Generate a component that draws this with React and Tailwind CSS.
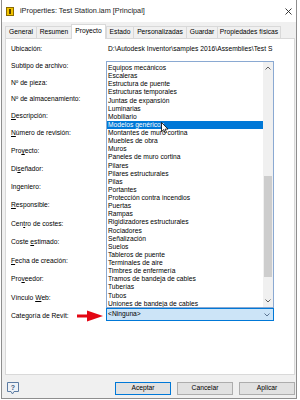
const rows = [
  { label: 'Ubicación:', h: 'h-[17px]' },
  { label: 'Subtipo de archivo:', h: 'h-[17px]' },
  { label: 'Nº de pieza:', h: 'h-[16px]' },
  { label: 'Nº de almacenamiento:', h: 'h-[17px]' },
  { label: 'Descripción:', u: 0, h: 'h-[17px]' },
  { label: 'Número de revisión:', u: 0, h: 'h-[18px]' },
  { label: 'Proyecto:', u: 3, h: 'h-[18px]' },
  { label: 'Diseñador:', u: 2, h: 'h-[18px]' },
  { label: 'Ingeniero:', h: 'h-[18px]' },
  { label: 'Responsible:', u: 0, h: 'h-[19px]' },
  { label: 'Centro de costes:', u: 3, h: 'h-[18px]' },
  { label: 'Coste estimado:', u: 6, h: 'h-[19px]' },
  { label: 'Fecha de creación:', u: 0, h: 'h-[18px]' },
  { label: 'Proveedor:', u: 3, h: 'h-[19px]' },
  { label: 'Vínculo Web:', u: 8, h: 'h-[16px]' },
];

const categories = [
  'Equipos mecánicos', 'Escaleras', 'Estructura de puente', 'Estructuras temporales',
  'Juntas de expansión', 'Luminarias', 'Mobiliario', 'Modelos genéricos',
  'Montantes de muro cortina', 'Muebles de obra', 'Muros', 'Paneles de muro cortina',
  'Pilares', 'Pilares estructurales', 'Pilas', 'Portantes', 'Protección contra incendios',
  'Puertas', 'Rampas', 'Rigidizadores estructurales', 'Rociadores', 'Señalización',
  'Suelos', 'Tableros de puente', 'Terminales de aire', 'Timbres de enfermería',
  'Tramos de bandeja de cables', 'Tuberías', 'Tubos', 'Uniones de bandeja de cables',
];

const tabs = [
  { name: 'General', w: 'w-[31px]' },
  { name: 'Resumen', w: 'w-[35px]' },
  { name: 'Proyecto', w: 'w-[35px]', active: true },
  { name: 'Estado', w: 'w-[27px]' },
  { name: 'Personalizadas', w: 'w-[53px]' },
  { name: 'Guardar', w: 'w-[31px]' },
  { name: 'Propiedades físicas', w: 'w-[64px]', last: true },
];

function Label({ text, u }) {
  if (u === undefined) return <span>{text}</span>;
  return (
    <span>
      {text.slice(0, u)}
      <span className="underline underline-offset-1">{text[u]}</span>
      {text.slice(u + 1)}
    </span>
  );
}

function Chevron({ up, color = '#606060' }) {
  return (
    <svg width="6" height="4" viewBox="0 0 6 4">
      <polyline
        points={up ? '0.5,3.5 3,1 5.5,3.5' : '0.5,0.5 3,3 5.5,0.5'}
        fill="none"
        stroke={color}
        strokeWidth="1"
      />
    </svg>
  );
}

function DropList() {
  return (
    <div className="absolute left-0 bottom-full w-[168px] h-[247px] bg-white border border-[#8aa9d2] flex">
      <div className="flex-1 pt-[2px] overflow-hidden">
        {categories.map((c) => (
          <div
            key={c}
            className={
              c === 'Modelos genéricos'
                ? 'h-[8.13px] leading-[8.13px] pl-[1px] whitespace-nowrap bg-[#0078d7] text-white'
                : 'h-[8.13px] leading-[8.13px] pl-[1px] whitespace-nowrap'
            }
          >
            {c}
          </div>
        ))}
      </div>
      <div className="w-[10px] bg-[#f0f0f0] flex flex-col">
        <div className="h-[12px] flex items-center justify-center">
          <Chevron up />
        </div>
        <div className="flex-1">
          <div className="mt-[102px] h-[101px] mx-[1px] bg-[#cdcdcd]" />
        </div>
        <div className="h-[12px] flex items-center justify-center">
          <Chevron />
        </div>
      </div>
      {/* mouse pointer */}
      <svg className="absolute left-[54px] top-[60px]" width="8" height="12" viewBox="0 0 8 12">
        <path d="M0.5 0.5 L0.5 9.5 L2.7 7.6 L4.2 11 L5.6 10.4 L4.1 7.1 L7 7.1 Z" fill="#fff" stroke="#000" strokeWidth="0.8" />
      </svg>
    </div>
  );
}

export default function App() {
  return (
    <div className="w-[300px] h-[400px] bg-white font-['Liberation_Sans',Arial,sans-serif] text-[6.7px] leading-none text-black">
      <div className="ml-[1px] w-[296px] h-[399px] flex flex-col bg-[#f0f0f0] border-x border-b border-[#8e8e8e]">
        {/* title bar */}
        <div className="h-[22px] bg-white flex items-center pl-[4px] pr-[3px]">
          <svg width="8" height="9" viewBox="0 0 8 9">
            <rect x="0.5" y="0.5" width="7" height="8" fill="#f2c300" stroke="#8a6a00" />
            <rect x="3" y="2" width="2" height="5" fill="#5a4300" />
          </svg>
          <span className="ml-[6px] text-[7.3px] text-[#1a1a1a]">iProperties: Test Station.iam [Principal]</span>
          <svg className="ml-auto mr-[1px]" width="7" height="7" viewBox="0 0 7 7">
            <path d="M0.5 0.5 L6.5 6.5 M6.5 0.5 L0.5 6.5" stroke="#222" strokeWidth="0.9" />
          </svg>
        </div>

        <div className="pl-[3px] pr-[1px] flex flex-col">
          {/* tabs */}
          <div className="h-[16px] flex items-end">
            {tabs.map((t) =>
              t.active ? (
                <div
                  key={t.name}
                  className={`${t.w} h-[15px] -mb-px relative z-10 bg-white border-x border-t border-[#d9d9d9] flex items-center justify-center pb-[1px]`}
                >
                  {t.name}
                </div>
              ) : (
                <div
                  key={t.name}
                  className={
                    t.last
                      ? `${t.w} h-[12px] bg-[#f0f0f0] border-l border-r border-t border-[#d9d9d9] flex items-center justify-center`
                      : `${t.w} h-[12px] bg-[#f0f0f0] border-l border-t border-[#d9d9d9] flex items-center justify-center`
                  }
                >
                  {t.name}
                </div>
              )
            )}
          </div>

          {/* panel */}
          <div className="h-[337px] bg-white border border-[#d9d9d9] pt-[4px] pl-[5px]">
            {rows.map((r, i) => (
              <div key={r.label} className={`${r.h} flex items-start`}>
                <div className="w-[95px] leading-[12px] whitespace-nowrap">
                  <Label text={r.label} u={r.u} />
                </div>
                {i === 0 && (
                  <div className="w-[170px] leading-[12px] pl-[2px] whitespace-nowrap tracking-[0.04px]">
                    D:\Autodesk Inventor\samples 2016\Assemblies\Test S
                  </div>
                )}
              </div>
            ))}

            <div className="h-[14px] flex items-start">
              <div className="w-[95px] flex items-start">
                <div className="leading-[12px] mt-[2px] whitespace-nowrap">Categoría de Revit:</div>
                <svg className="ml-auto mr-[3px] mt-[2px]" width="26" height="12" viewBox="0 0 26 12">
                  <rect x="0" y="4.5" width="12" height="3" fill="#e30613" />
                  <polygon points="10,0.5 26,6 10,11.5" fill="#e30613" />
                </svg>
              </div>
              <div className="relative">
                <DropList />
                <div className="w-[168px] h-[13px] bg-[#cce4f7] border border-[#0078d7] flex items-center pl-[1px] pr-[3px]">
                  <span>&lt;Ninguna&gt;</span>
                  <span className="ml-auto">
                    <Chevron color="#5b7593" />
                  </span>
                </div>
              </div>
            </div>
          </div>

          {/* bottom bar */}
          <div className="mt-[7px] h-[13px] flex items-center">
            <svg className="ml-[2px]" width="13" height="13" viewBox="0 0 13 13">
              <path d="M0.5 0.5 H11.5 V9.5 H7 L5.5 12 L4 9.5 H0.5 Z" fill="#eef2f7" stroke="#5d7ca3" />
              <text x="6" y="7.8" fontSize="7" textAnchor="middle" fill="#3b5a82" fontFamily="Liberation Sans, Arial, sans-serif" fontWeight="bold">?</text>
            </svg>
            <div className="ml-auto flex gap-[6px]">
              <div className="w-[56px] h-[13px] bg-[#e1e1e1] border border-[#0078d7] flex items-center justify-center">Aceptar</div>
              <div className="w-[56px] h-[13px] bg-[#e1e1e1] border border-[#adadad] flex items-center justify-center">Cancelar</div>
              <div className="w-[56px] h-[13px] bg-[#e1e1e1] border border-[#adadad] flex items-center justify-center">Aplicar</div>
            </div>
          </div>
        </div>
      </div>
    </div>
  );
}
